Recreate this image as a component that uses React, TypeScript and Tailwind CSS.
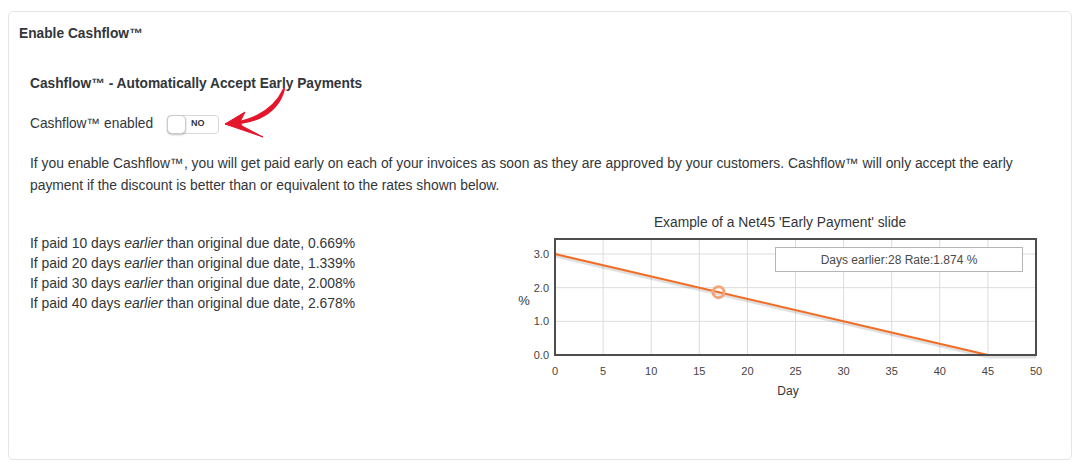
import React from 'react';

const rates = [
  { days: 10, rate: '0.669%' },
  { days: 20, rate: '1.339%' },
  { days: 30, rate: '2.008%' },
  { days: 40, rate: '2.678%' },
];

// plot geometry (svg coords)
const PX = 46;
const PY = 29;
const PW = 481;
const PH = 116;
const dayX = (d: number) => PX + (d / 50) * PW;
const rateY = (v: number) => PY + PH - v * 33.67;

const Toggle = () => (
  <div className="relative ml-[14px] flex h-[19px] w-[52px] items-center rounded-[4px] border border-[#d5d8dc] bg-white">
    <div className="absolute left-[-1px] top-[-1px] h-[19px] w-[19px] rounded-[5px] border border-[#c9ccd0] bg-white shadow-[0_1px_2px_rgba(0,0,0,0.25)]" />
    <span className="ml-[23px] text-[9px] font-bold text-[#32363a]">NO</span>
  </div>
);

const Arrow = () => (
  <svg className="pointer-events-none absolute left-[209px] top-[74px]" width="72" height="56" viewBox="0 0 72 56">
    <path
      d="M66 3 C63 15 56 25 41 32 C31 36 21 38 10 38 C21 36.5 30 34.5 39 30 C53 23 61 14 66 3 Z"
      fill="#e3162b"
      stroke="#e3162b"
      strokeWidth="2.2"
      strokeLinejoin="round"
    />
    <path d="M7 38 L27 26 L22 36 Z" fill="#e3162b" stroke="#e3162b" strokeWidth="1" strokeLinejoin="round" />
    <path d="M7 38 L45 51 L24 40 Z" fill="#e3162b" stroke="#e3162b" strokeWidth="1" strokeLinejoin="round" />
    <path d="M7 38 L22 35 L25 41 Z" fill="#e3162b" />
  </svg>
);

const Chart = () => {
  const days = [0, 5, 10, 15, 20, 25, 30, 35, 40, 45, 50];
  const vals = [3, 2, 1, 0];
  const x0 = dayX(0);
  const y0 = rateY(3);
  const x45 = dayX(45);
  const yz = rateY(0);
  const mx = dayX(17);
  const my = rateY(3 * (1 - 17 / 45));
  return (
    <svg width="540" height="195" viewBox="0 0 540 195" className="block" style={{ fontFamily: '"Liberation Sans", Arial, sans-serif' }}>
      <text x="271" y="17" textAnchor="middle" fontSize="13.8" fill="#32363a">
        Example of a Net45 'Early Payment' slide
      </text>
      <rect x={PX} y={PY} width={PW} height={PH} fill="#fff" />
      {days.slice(1, 10).map((d) => (
        <line key={d} x1={dayX(d)} y1={PY} x2={dayX(d)} y2={PY + PH} stroke="#dcdcdc" strokeWidth="1" />
      ))}
      {vals.slice(0, 3).map((v) => (
        <line key={v} x1={PX} y1={rateY(v)} x2={PX + PW} y2={rateY(v)} stroke="#dcdcdc" strokeWidth="1" />
      ))}
      <rect x="266.5" y="37.5" width="247" height="24" fill="#fff" stroke="#b5b5b5" strokeWidth="1" />
      <text x="390" y="54" textAnchor="middle" fontSize="12" fill="#4a4a4a">
        Days earlier:28 Rate:1.874 %
      </text>
      {/* line shadow */}
      <polyline
        points={`${x0},${y0 + 2} ${x45},${yz + 2} ${PX + PW},${yz + 2}`}
        fill="none"
        stroke="#000"
        strokeOpacity="0.12"
        strokeWidth="3"
      />
      <polyline
        points={`${x0},${y0} ${x45},${yz} ${PX + PW},${yz}`}
        fill="none"
        stroke="#f26b21"
        strokeWidth="2"
      />
      <circle cx={mx} cy={my} r="5.5" fill="none" stroke="#f4a47a" strokeWidth="3" />
      <rect x={PX} y={PY} width={PW} height={PH} fill="none" stroke="#4d4d4d" strokeWidth="2" />
      {vals.map((v) => (
        <text key={v} x="40" y={rateY(v) + 4} textAnchor="end" fontSize="11" fill="#444">
          {v.toFixed(1)}
        </text>
      ))}
      <text x="15" y="95" textAnchor="middle" fontSize="13" fill="#32363a">
        %
      </text>
      {days.map((d) => (
        <text key={d} x={dayX(d)} y="165" textAnchor="middle" fontSize="11" fill="#444">
          {d}
        </text>
      ))}
      <text x="279" y="185" textAnchor="middle" fontSize="12" fill="#32363a">
        Day
      </text>
    </svg>
  );
};

export default function App() {
  return (
    <div className="h-[467px] w-[1080px] bg-white pl-[8px] pt-[11px]" style={{ fontFamily: '"Liberation Sans", Arial, sans-serif' }}>
      <div className="relative h-[449px] w-[1064px] rounded-[5px] border border-[#e5e5e5] bg-white text-[#32363a]">
        <div className="pl-[10px] pt-[13px] text-[13.75px] font-bold leading-[18px]">Enable Cashflow™</div>
        <div className="px-[21px]">
          <div className="mt-[32px] text-[13.75px] font-bold leading-[18px]">Cashflow™ - Automatically Accept Early Payments</div>
          <div className="mt-[21px] flex h-[20px] items-center text-[13.75px]">
            <span>Cashflow™ enabled</span>
            <Toggle />
          </div>
          <p className="mt-[18px] text-[13.85px] leading-[22px]">
            If you enable Cashflow™, you will get paid early on each of your invoices as soon as they are approved by your customers. Cashflow™ will only accept the early payment if the discount is better than or equivalent to the rates shown below.
          </p>
          <div className="flex items-start">
            <div className="mt-[37px] w-[479px] text-[13.9px] leading-[20px]">
              {rates.map((r) => (
                <div key={r.days}>
                  If paid {r.days} days <em>earlier</em> than original due date, {r.rate}
                </div>
              ))}
            </div>
            <div className="mt-[14px]">
              <Chart />
            </div>
          </div>
        </div>
        <Arrow />
      </div>
    </div>
  );
}
